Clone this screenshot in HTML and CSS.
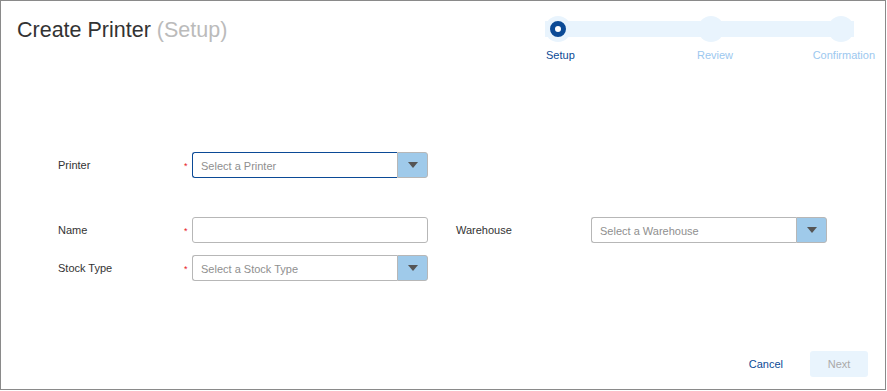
FILE: index.html
```html
<!DOCTYPE html>
<html lang="en">
<head>
<meta charset="utf-8">
<title>Create Printer</title>
<link rel="stylesheet" href="styles.css">
</head>
<body>
<div class="frame">
  <header class="header">
    <h1 class="title">Create Printer <span class="title-sub">(Setup)</span></h1>
    <div class="stepper">
      <div class="track">
        <span class="dot dot-active"><span class="ring"></span></span>
        <span></span>
        <span class="dot"></span>
        <span></span>
        <span class="dot"></span>
      </div>
      <div class="step-labels">
        <span class="step-label step-current">Setup</span>
        <span class="step-label">Review</span>
        <span class="step-label step-last">Confirmation</span>
      </div>
    </div>
  </header>

  <main class="form">
    <div class="row row-first">
      <div class="field">
        <label class="label">Printer</label>
        <span class="req">*</span>
        <div class="select select-focus">
          <span class="select-input">Select a Printer</span>
          <span class="select-btn"><span class="caret"></span></span>
        </div>
      </div>
    </div>
    <div class="row row-second">
      <div class="field">
        <label class="label">Name</label>
        <span class="req">*</span>
        <div class="text-input"></div>
      </div>
      <div class="field field-right">
        <label class="label label-wide">Warehouse</label>
        <div class="select">
          <span class="select-input">Select a Warehouse</span>
          <span class="select-btn"><span class="caret"></span></span>
        </div>
      </div>
    </div>
    <div class="row row-third">
      <div class="field">
        <label class="label">Stock Type</label>
        <span class="req">*</span>
        <div class="select">
          <span class="select-input">Select a Stock Type</span>
          <span class="select-btn"><span class="caret"></span></span>
        </div>
      </div>
    </div>
  </main>

  <footer class="footer">
    <button class="btn-link">Cancel</button>
    <button class="btn-next">Next</button>
  </footer>
</div>
</body>
</html>
```

FILE: styles.css
```css
* { box-sizing: border-box; }

html, body {
  margin: 0;
  padding: 0;
  background: #ffffff;
  font-family: "Liberation Sans", Arial, sans-serif;
}

.frame {
  width: 886px;
  height: 390px;
  border: 1px solid #8a8a8a;
  display: flex;
  flex-direction: column;
}

.header {
  display: flex;
  justify-content: space-between;
  padding: 0 10px 0 16px;
}

.title {
  margin: 17px 0 0 0;
  font-size: 21.5px;
  font-weight: normal;
  line-height: 24px;
  color: #333333;
}

.title-sub {
  color: #bbbbbb;
}

.stepper {
  width: 330px;
  margin-top: 15px;
}

.track {
  width: 309px;
  height: 26px;
  display: grid;
  grid-template-columns: 26px 127px 26px 104px 26px;
  background: linear-gradient(#e9f4fd, #e9f4fd) center / 100% 16px no-repeat;
}

.dot {
  width: 26px;
  height: 26px;
  border-radius: 50%;
  background: #e9f4fd;
  display: flex;
  align-items: center;
  justify-content: center;
}

.ring {
  width: 16px;
  height: 16px;
  border-radius: 50%;
  border: 5px solid #0b4a96;
  background: #ffffff;
}

.step-labels {
  display: grid;
  grid-template-columns: 151px 115px 64px;
  margin-top: 7px;
  font-size: 11px;
  line-height: 13px;
  color: #9cc8ef;
}

.step-label {
  padding-left: 1px;
}

.step-current {
  color: #0b4a96;
}

.step-last {
  text-align: right;
  padding-left: 0;
  white-space: nowrap;
}

.form {
  padding-left: 57px;
  font-size: 11px;
  color: #333333;
}

.row {
  display: flex;
  align-items: center;
}

.row-first { margin-top: 90px; }
.row-second { margin-top: 39px; }
.row-third { margin-top: 12px; }

.field {
  display: flex;
  align-items: center;
  height: 26px;
}

.field-right {
  margin-left: 28px;
}

.label {
  width: 126px;
  font-size: 11px;
  line-height: 13px;
  color: #333333;
}

.label-wide {
  width: 135px;
}

.req {
  width: 8px;
  color: #e8161b;
  font-size: 9px;
  line-height: 9px;
  padding-top: 3px;
}

.select {
  width: 236px;
  height: 26px;
  display: flex;
}

.select-input {
  flex: 1;
  height: 26px;
  border: 1px solid #b7b7b7;
  border-right: none;
  border-radius: 3px 0 0 3px;
  padding-left: 8px;
  padding-top: 1px;
  display: flex;
  align-items: center;
  color: #8f8f8f;
  font-size: 11px;
}

.select-focus .select-input {
  border-color: #0b4a96;
}

.select-btn {
  width: 31px;
  height: 26px;
  background: #9fcaea;
  border: 1px solid #b7b7b7;
  border-radius: 0 3px 3px 0;
  display: flex;
  align-items: center;
  justify-content: center;
}

.caret {
  width: 0;
  height: 0;
  border-left: 5px solid transparent;
  border-right: 5px solid transparent;
  border-top: 6px solid #555555;
}

.text-input {
  width: 236px;
  height: 26px;
  border: 1px solid #b7b7b7;
  border-radius: 3px;
}

.footer {
  margin-top: auto;
  display: flex;
  justify-content: flex-end;
  align-items: center;
  padding: 0 17px 12px 0;
}

.btn-link {
  border: none;
  background: none;
  padding: 0;
  margin-right: 27px;
  font-family: inherit;
  font-size: 11px;
  color: #0b4a96;
}

.btn-next {
  width: 58px;
  height: 26px;
  border: none;
  border-radius: 3px;
  background: #e9f4fd;
  color: #a9a9a9;
  font-family: inherit;
  font-size: 11px;
}
```
